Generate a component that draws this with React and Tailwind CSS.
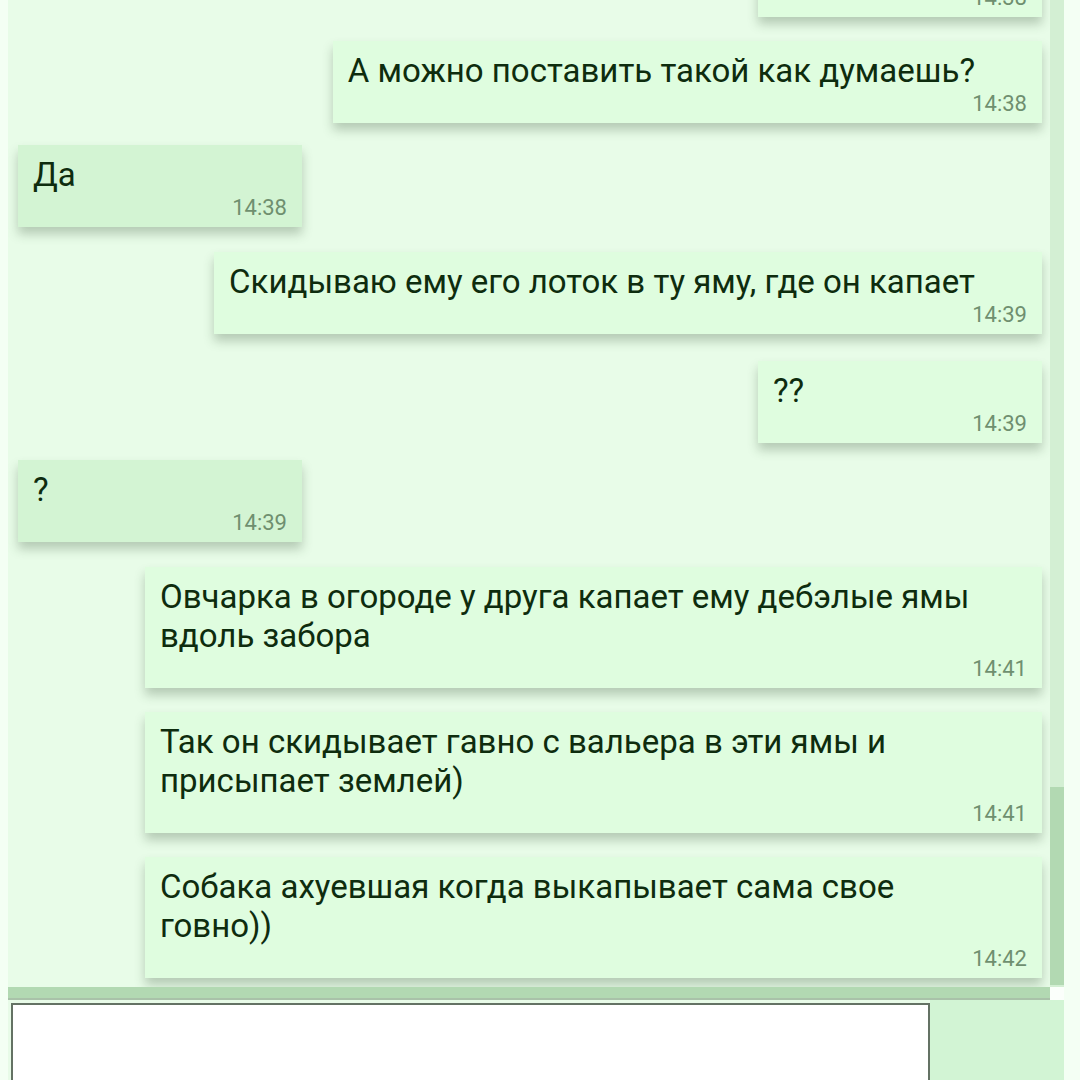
import React from "react";

const messages = [
  { out: true, text: "\u00a0", time: "14:38", gap: "mt-0" },
  { out: true, text: "А можно поставить такой как думаешь?", time: "14:38", gap: "mt-[24px]" },
  { out: false, text: "Да", time: "14:38", gap: "mt-[22px]" },
  { out: true, text: "Скидываю ему его лоток в ту яму, где он капает", time: "14:39", gap: "mt-[25px]" },
  { out: true, text: "??", time: "14:39", gap: "mt-[27px]" },
  { out: false, text: "?", time: "14:39", gap: "mt-[17px]" },
  { out: true, text: "Овчарка в огороде у друга капает ему дебэлые ямы вдоль забора", time: "14:41", gap: "mt-[25px]" },
  { out: true, text: "Так он скидывает гавно с вальера в эти ямы и присыпает землей)", time: "14:41", gap: "mt-[24px]" },
  { out: true, text: "Собака ахуевшая когда выкапывает сама свое говно))", time: "14:42", gap: "mt-[24px]" },
];

function Bubble({ m }) {
  return (
    <div
      className={`${m.gap} w-fit min-w-[284px] max-w-[897px] pl-[15px] pr-[15px] pt-[10px] pb-[6px] shadow-[0_7px_10px_rgba(50,80,50,0.28)] ${
        m.out ? "self-end bg-[#dffddf]" : "self-start bg-[#d3f4d3]"
      }`}
    >
      <p className="pr-[52px] text-[33px] leading-[39px] text-[#0e2c0e]">{m.text}</p>
      <div className="mt-[1px] text-right text-[22px] leading-[26px] text-[#6f8f6f]">{m.time}</div>
    </div>
  );
}

export default function App() {
  return (
    <div
      className="flex h-[1080px] w-[1080px] overflow-hidden bg-[#f4fff4]"
      style={{ fontFamily: "Roboto, 'Noto Sans', sans-serif" }}
    >
      <div className="ml-[8px] flex w-[1056px] flex-col">
        {/* chat log with scrollbars */}
        <div className="flex h-[1000px] flex-col">
          <div className="flex h-[987px]">
            <div className="h-full w-[1042px] overflow-hidden bg-[#e8fce8]">
              <div className="-mt-[65px] flex flex-col pl-[10px] pr-[8px]">
                {messages.map((m, i) => (
                  <Bubble key={i} m={m} />
                ))}
              </div>
            </div>
            {/* vertical scrollbar */}
            <div className="flex h-full w-[14px] flex-col bg-[#d3efd3]">
              <div className="mt-[787px] h-[198px] w-full bg-[#b2d9b2]" />
            </div>
          </div>
          {/* horizontal scrollbar */}
          <div className="flex h-[13px]">
            <div className="h-full w-[1042px] border-b-[2px] border-[#a9c2a9] bg-[#b2d9b2]" />
            <div className="h-full w-[14px] bg-[#fbfffb]" />
          </div>
        </div>
        {/* composer */}
        <div className="flex h-[80px] bg-[#e8fbe8]">
          <div className="ml-[3px] mt-[3px] h-[90px] w-[919px] border-[2px] border-[#647264] bg-white" />
          <div className="h-full w-[134px] bg-[#d2f4d4]" />
        </div>
      </div>
    </div>
  );
}
